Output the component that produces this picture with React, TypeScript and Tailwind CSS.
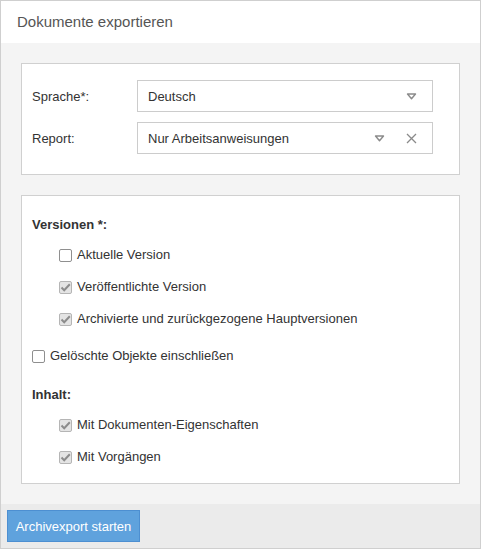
import React from 'react';

const Caret = () => (
  <svg width="11" height="7" viewBox="0 0 11 7" className="shrink-0">
    <path d="M1.5 1 L9.5 1 L5.5 5.8 Z" fill="none" stroke="#8a8a8a" strokeWidth="1.4" strokeLinejoin="round" />
  </svg>
);

const Clear = () => (
  <svg width="11" height="11" viewBox="0 0 11 11" className="shrink-0">
    <path d="M1 1 L10 10 M10 1 L1 10" stroke="#8a8a8a" strokeWidth="1.3" />
  </svg>
);

const Select = ({ value, clearable }: { value: string; clearable?: boolean }) => (
  <div className="flex h-[32px] w-[296px] items-center border border-[#cccccc] bg-white pl-[10px] pr-[15px]">
    <span className="flex-1 pt-[2px] text-[13px] text-[#333333]">{value}</span>
    <Caret />
    {clearable && (
      <span className="ml-[21px]">
        <Clear />
      </span>
    )}
  </div>
);

const Check = ({ checked, label, indent }: { checked?: boolean; label: string; indent?: boolean }) => (
  <div className={`flex h-8 items-center ${indent ? 'pl-[27px]' : ''}`}>
    {checked ? (
      <span className="flex h-[13px] w-[13px] items-center justify-center rounded-[2px] border border-[#b5b5b5] bg-[#e4e4e4]">
        <svg width="11" height="9" viewBox="0 0 11 9">
          <path d="M1.5 4.5 L4.2 7.2 L9.8 1.2" fill="none" stroke="#8c8c8c" strokeWidth="2" />
        </svg>
      </span>
    ) : (
      <span className="h-[13px] w-[13px] rounded-[2px] border border-[#8f8f8f] bg-white" />
    )}
    <span className="ml-[5px] text-[13px] text-[#333333]">{label}</span>
  </div>
);

export default function App() {
  return (
    <div className="flex h-[549px] w-[481px] flex-col border border-[#cfcfcf] bg-[#f4f4f4] font-['Liberation_Sans',Arial,sans-serif]">
      <div className="flex h-[42px] items-center bg-white pl-[16px] pt-px text-[15px] text-[#555555]">
        Dokumente exportieren
      </div>

      <div className="flex flex-1 flex-col gap-5 px-5 pt-5">
        <div className="flex h-[112px] flex-col gap-[10px] border border-[#d0d0d0] bg-white pl-[10px] pt-[16px]">
          <div className="flex items-center">
            <span className="w-[105px] pt-[2px] text-[13px] text-[#333333]">Sprache*:</span>
            <Select value="Deutsch" />
          </div>
          <div className="flex items-center">
            <span className="w-[105px] pt-[2px] text-[13px] text-[#333333]">Report:</span>
            <Select value="Nur Arbeitsanweisungen" clearable />
          </div>
        </div>

        <div className="flex h-[289px] flex-col border border-[#d0d0d0] bg-white pl-[10px] pt-[15px]">
          <div className="flex h-[28px] items-center text-[13px] font-bold text-[#333333]">Versionen *:</div>
          <Check label="Aktuelle Version" indent />
          <Check label="Veröffentlichte Version" checked indent />
          <Check label="Archivierte und zurückgezogene Hauptversionen" checked indent />
          <div className="mt-[5px]">
            <Check label="Gelöschte Objekte einschließen" />
          </div>
          <div className="mt-2 flex h-[29px] items-center pt-px text-[13px] font-bold text-[#333333]">Inhalt:</div>
          <Check label="Mit Dokumenten-Eigenschaften" checked indent />
          <Check label="Mit Vorgängen" checked indent />
        </div>
      </div>

      <div className="flex h-[44px] items-start bg-[#ebebeb] pl-[6px] pt-[6px]">
        <button className="h-[32px] w-[133px] border border-[#4d8fd1] bg-[#5fa2dd] pt-px text-[13px] text-white">
          Archivexport starten
        </button>
      </div>
    </div>
  );
}
